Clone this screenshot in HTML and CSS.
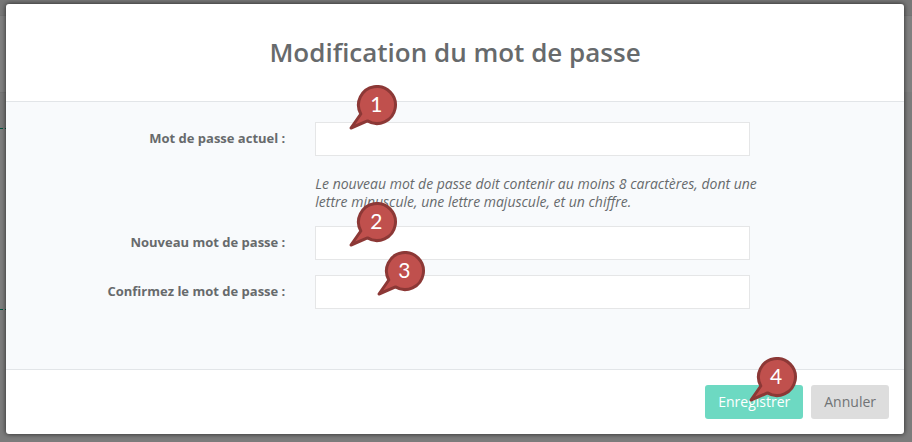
FILE: index.html
```html
<!DOCTYPE html>
<html lang="fr">
<head>
  <meta charset="UTF-8">
  <meta name="viewport" content="width=device-width, initial-scale=1.0">
  <title>Modification du mot de passe</title>
  <link rel="stylesheet" href="styles.css">
</head>
<body>
  <svg class="defs" aria-hidden="true">
    <symbol id="pin" viewBox="0 0 50 46">
      <path d="M12.8 29 A18.5 18.5 0 1 1 19.5 35.9 L3 43 Z" fill="#c0504d" stroke="#8c3836" stroke-width="3" stroke-linejoin="round"/>
    </symbol>
  </svg>

  <div class="page" aria-hidden="true">
    <div class="page-top"></div>
    <div class="page-band"></div>
    <div class="page-row"></div>
    <div class="page-row tall"></div>
  </div>

  <div class="overlay">
    <form class="modal">
      <div class="modal-header">
        <h1>Modification du mot de passe</h1>
      </div>

      <div class="modal-body">
        <label for="current">Mot de passe actuel :</label>
        <div class="field">
          <input type="password" id="current">
          <span class="pin pin-1"><svg><use href="#pin"/></svg><b>1</b></span>
        </div>

        <p class="hint">Le nouveau mot de passe doit contenir au moins 8 caractères, dont une<br>lettre minuscule, une lettre majuscule, et un chiffre.</p>

        <label for="new">Nouveau mot de passe :</label>
        <div class="field">
          <input type="password" id="new">
          <span class="pin pin-2"><svg><use href="#pin"/></svg><b>2</b></span>
        </div>

        <label for="confirm">Confirmez le mot de passe :</label>
        <div class="field">
          <input type="password" id="confirm">
          <span class="pin pin-3"><svg><use href="#pin"/></svg><b>3</b></span>
        </div>
      </div>

      <div class="modal-footer">
        <div class="action">
          <button type="submit" class="btn btn-save">Enregistrer</button>
          <span class="pin pin-4"><svg><use href="#pin"/></svg><b>4</b></span>
        </div>
        <button type="button" class="btn btn-cancel">Annuler</button>
      </div>
    </form>
  </div>
</body>
</html>
```
FILE: styles.css
```css
* {
  box-sizing: border-box;
}

body {
  margin: 0;
  min-height: 100vh;
  background: #7c7c7c;
  color: #676a6c;
  font-family: "Open Sans", sans-serif;
  font-size: 13px;
  line-height: 18px;
}

.defs {
  position: absolute;
  width: 0;
  height: 0;
}

/* dimmed page behind the dialog */
.page {
  position: absolute;
  inset: 0;
  overflow: hidden;
}

.page-top {
  height: 16px;
  background: #777;
  border-bottom: 1px solid #737373;
}

.page-band {
  height: 76px;
  background: #808080;
}

.page-row {
  width: 50%;
  height: 37px;
  background: #797979;
  border-top: 1px solid #747474;
  border-bottom: 1px dashed #00533f;
}

.page-row.tall {
  height: 181px;
  background: #7e7e7e;
  border-top: none;
}

.overlay {
  position: relative;
  padding: 4px 8px 8px 6px;
}

.modal {
  background: #fff;
  border-radius: 3px;
  box-shadow: 0 0 5px rgba(0, 0, 0, 0.7);
}

.modal-header {
  padding: 30px 15px 31px;
  border-bottom: 1px solid #e2e5e8;
  text-align: center;
}

h1 {
  margin: 0;
  font-size: 26px;
  font-weight: 600;
  line-height: 36px;
}

.modal-body {
  display: grid;
  grid-template-columns: minmax(0, 9fr) minmax(0, 14fr) minmax(0, 4fr);
  gap: 15px 30px;
  align-items: center;
  padding: 20px 0 60px;
  background: #f8fafc;
}

label {
  grid-column: 1;
  padding-bottom: 2px;
  font-weight: 700;
  text-align: right;
}

.field {
  grid-column: 2;
  position: relative;
}

input {
  display: block;
  width: 100%;
  height: 34px;
  padding: 6px 12px;
  border: 1px solid #e5e6e7;
  background: #fff;
  color: inherit;
  font: inherit;
}

.hint {
  grid-column: 2;
  margin: 0;
  padding-top: 4px;
  font-size: 14px;
  font-style: italic;
  white-space: nowrap;
}

.modal-footer {
  display: flex;
  justify-content: flex-end;
  gap: 8px;
  padding: 15px;
  border-top: 1px solid #e2e5e8;
}

.action {
  position: relative;
}

.btn {
  height: 34px;
  padding: 0 12px 2px;
  border: 1px solid transparent;
  border-radius: 3px;
  font-family: inherit;
  font-size: 14px;
  cursor: pointer;
}

.btn-save {
  background: #6dd9c2;
  color: #fff;
}

.btn-cancel {
  background: #ddd;
  color: #707375;
}

/* numbered markers */
.pin {
  position: absolute;
  width: 50px;
  height: 46px;
  pointer-events: none;
}

.pin svg {
  display: block;
  width: 100%;
  height: 100%;
}

.pin b {
  position: absolute;
  top: 8px;
  right: 0;
  width: 44px;
  color: #fff;
  font-family: Lato, sans-serif;
  font-size: 21px;
  font-weight: 400;
  line-height: 22px;
  text-align: center;
}

.pin-1 {
  top: -37px;
  left: 33px;
}

.pin-2 {
  top: -24px;
  left: 33px;
}

.pin-3 {
  top: -24px;
  left: 61px;
}

.pin-4 {
  top: -28px;
  left: 43px;
}
```
